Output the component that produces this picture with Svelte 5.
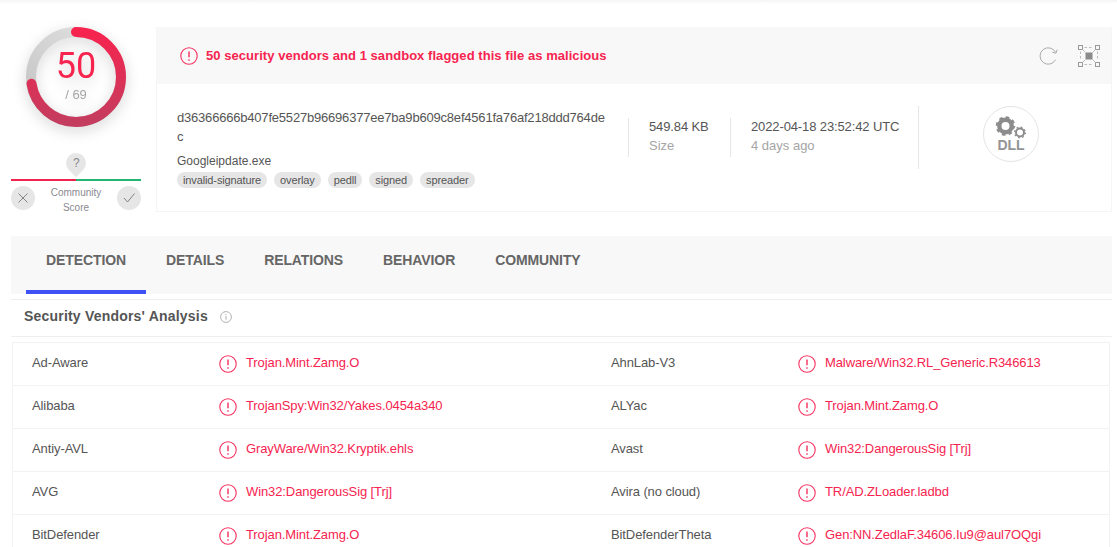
<script lang="ts">
	const tags = ['invalid-signature', 'overlay', 'pedll', 'signed', 'spreader'];
	const tabs = ['DETECTION', 'DETAILS', 'RELATIONS', 'BEHAVIOR', 'COMMUNITY'];
	const rows = [
		['Ad-Aware', 'Trojan.Mint.Zamg.O', 'AhnLab-V3', 'Malware/Win32.RL_Generic.R346613'],
		['Alibaba', 'TrojanSpy:Win32/Yakes.0454a340', 'ALYac', 'Trojan.Mint.Zamg.O'],
		['Antiy-AVL', 'GrayWare/Win32.Kryptik.ehls', 'Avast', 'Win32:DangerousSig [Trj]'],
		['AVG', 'Win32:DangerousSig [Trj]', 'Avira (no cloud)', 'TR/AD.ZLoader.ladbd'],
		['BitDefender', 'Trojan.Mint.Zamg.O', 'BitDefenderTheta', 'Gen:NN.ZedlaF.34606.Iu9@aul7OQgi']
	];

	const r = 45;
	const circ = 2 * Math.PI * r;
	const flagged = (50 / 69) * circ;
</script>

{#snippet alert(size: number)}
	<svg class="alert" width={size} height={size} viewBox="0 0 18 18" fill="none" stroke="#f6305f">
		<circle cx="9" cy="9" r="8.2" stroke-width="1.1" />
		<path d="M9 4.6v5.6M9 12.2v1.5" stroke-width="1.4" />
	</svg>
{/snippet}

<div class="page">
	<div class="top">
		<aside class="score">
			<div class="gauge">
				<svg width="110" height="110" viewBox="0 0 110 110">
					<defs>
						<linearGradient id="red" x1="1" y1="0" x2="0" y2="0">
							<stop offset="0" stop-color="#f6244f" />
							<stop offset="1" stop-color="#c43c5e" />
						</linearGradient>
						<linearGradient id="grey" x1="1" y1="0" x2="0" y2="1">
							<stop offset="0" stop-color="#e4e4e4" />
							<stop offset="1" stop-color="#c2c2c2" />
						</linearGradient>
					</defs>
					<circle cx="55" cy="55" r="45" fill="none" stroke="url(#grey)" stroke-width="10" />
					<circle
						cx="55"
						cy="55"
						r="45"
						fill="none"
						stroke="url(#red)"
						stroke-width="10"
						stroke-linecap="round"
						stroke-dasharray="{flagged} {circ}"
						transform="rotate(-90 55 55)"
					/>
				</svg>
				<div class="count">
					<span class="num">50</span>
					<span class="total">/ 69</span>
				</div>
			</div>

			<div class="community">
				<div class="pin"><span>?</span></div>
				<div class="bar"></div>
				<div class="votes">
					<button aria-label="Harmless">
						<svg width="12" height="12" viewBox="0 0 12 12" fill="none" stroke="#777" stroke-width="0.9"><path d="M1.5 1.5l9 9M10.5 1.5l-9 9" /></svg>
					</button>
					<div class="label">Community<br />Score</div>
					<button aria-label="Malicious">
						<svg width="14" height="12" viewBox="0 0 14 12" fill="none" stroke="#777" stroke-width="0.9"><path d="M2 6l3.5 4L12.5 1.5" /></svg>
					</button>
				</div>
			</div>
		</aside>

		<section class="card">
			<div class="card-head">
				{@render alert(18)}
				<span class="verdict">50 security vendors and 1 sandbox flagged this file as malicious</span>
				<div class="tools">
					<svg width="20" height="18" viewBox="0 0 20 18" fill="none" stroke="#aaa" stroke-width="1">
						<path d="M17.6 5.4A8.2 8.2 0 1 0 17.6 12.6" />
						<path d="M19.2 2.6l-1.3 3.6-3.6-1" />
					</svg>
					<svg width="22" height="22" viewBox="0 0 22 22" fill="none" stroke="#999">
						<rect x="0.5" y="0.5" width="4" height="4" />
						<rect x="17.5" y="0.5" width="4" height="4" />
						<rect x="0.5" y="17.5" width="4" height="4" />
						<rect x="17.5" y="17.5" width="4" height="4" />
						<rect x="7.5" y="7.5" width="7" height="7" fill="#8a8a8a" stroke="none" />
						<path d="M6.5 2.5h9M6.5 19.5h9M2.5 6.5v9M19.5 6.5v9" stroke-dasharray="2.5 2" stroke="#bbb" />
						<path d="M4.5 4.5l3 3M17.5 4.5l-3 3M4.5 17.5l3-3M17.5 17.5l-3-3" stroke="#bbb" />
					</svg>
				</div>
			</div>
			<div class="card-body">
				<div class="file">
					<div class="hash">d36366666b407fe5527b96696377ee7ba9b609c8ef4561fa76af218ddd764dec</div>
					<div class="name">Googleipdate.exe</div>
					<div class="tags">
						{#each tags as tag}
							<span class="tag">{tag}</span>
						{/each}
					</div>
				</div>
				<div class="meta size">
					<div class="value">549.84 KB</div>
					<div class="sub">Size</div>
				</div>
				<div class="meta date">
					<div class="value">2022-04-18 23:52:42 UTC</div>
					<div class="sub">4 days ago</div>
				</div>
				<div class="type">
					<div class="type-badge">
						<svg width="36" height="24" viewBox="0 0 36 24" fill="none">
							<circle cx="12.5" cy="10" r="6.2" stroke="#8c8c8c" stroke-width="4.4" />
							<circle cx="12.5" cy="10" r="8.8" stroke="#8c8c8c" stroke-width="2" stroke-dasharray="3.6 3.31" />
							<circle cx="27" cy="16.5" r="7" fill="#fff" />
							<circle cx="27" cy="16.5" r="4" stroke="#8c8c8c" stroke-width="2" />
							<circle cx="27" cy="16.5" r="5.4" stroke="#8c8c8c" stroke-width="1.2" stroke-dasharray="1.8 2.44" />
						</svg>
						<span>DLL</span>
					</div>
				</div>
			</div>
		</section>
	</div>

	<nav class="tabs">
		{#each tabs as tab, i}
			<div class="tab" class:active={i === 0}>{tab}</div>
		{/each}
	</nav>

	<h2 class="heading">
		Security Vendors' Analysis
		<svg width="12" height="12" viewBox="0 0 12 12" fill="none" stroke="#aaa"><circle cx="6" cy="6" r="5.4" stroke-width="0.9" /><path d="M6 5.2v3.4M6 3.2v1" stroke-width="1" /></svg>
	</h2>

	<div class="table">
		{#each rows as row}
			<div class="row">
				<div class="vendor">{row[0]}</div>
				<div class="result">{@render alert(18)}<span>{row[1]}</span></div>
				<div class="vendor">{row[2]}</div>
				<div class="result">{@render alert(18)}<span>{row[3]}</span></div>
			</div>
		{/each}
	</div>
</div>

<style>
	:global(body) {
		background: #fff;
		overflow: hidden;
	}

	.page {
		height: 547px;
		overflow: hidden;
		box-sizing: border-box;
		padding: 27px 5px 0 11px;
		font-family: "Liberation Sans", Arial, sans-serif;
		font-size: 13px;
		color: #555;
		background: linear-gradient(#f4f4f4, #fff 4px);
	}

	.top {
		display: flex;
		height: 185px;
	}

	.score {
		width: 130px;
		margin-right: 15px;
		display: flex;
		flex-direction: column;
		align-items: center;
	}

	.gauge {
		position: relative;
		width: 110px;
		height: 110px;
		margin-top: -5px;
		filter: drop-shadow(0 4px 7px rgba(0, 0, 0, 0.16));
	}

	.gauge svg {
		display: block;
	}

	.count {
		position: absolute;
		inset: 0;
		display: flex;
		flex-direction: column;
		align-items: center;
	}

	.num {
		margin-top: 24px;
		font-family: Roboto, sans-serif;
		font-weight: 400;
		font-size: 36px;
		line-height: 40px;
		color: #f6244f;
	}

	.total {
		margin-top: 1px;
		font-size: 13px;
		line-height: 16px;
		color: #a5a5a5;
	}

	.community {
		width: 130px;
		margin-top: 21px;
	}

	.pin {
		width: 20px;
		height: 20px;
		margin: 0 auto;
		border-radius: 50% 50% 0 50%;
		transform: rotate(45deg);
		background: #e6e6e6;
		display: flex;
		align-items: center;
		justify-content: center;
		font-size: 12px;
		color: #888;
	}

	.pin span {
		transform: rotate(-45deg);
	}

	.bar {
		height: 2px;
		margin-top: 6px;
		background: linear-gradient(90deg, #f0234f 50%, #22b573 50%);
	}

	.votes {
		display: flex;
		justify-content: space-between;
		align-items: flex-start;
		margin-top: 5px;
	}

	.votes button {
		width: 24px;
		height: 24px;
		padding: 0;
		border: none;
		border-radius: 50%;
		background: #e6e6e6;
		display: flex;
		align-items: center;
		justify-content: center;
	}

	.label {
		margin-top: -1px;
		font-size: 10px;
		line-height: 15px;
		text-align: center;
		color: #8a8a92;
	}

	.card {
		flex: 1;
		display: flex;
		flex-direction: column;
		border: 1px solid #f5f5f5;
		border-width: 0 1px 1px 1px;
		box-sizing: border-box;
		min-width: 0;
	}

	.card-head {
		height: 57px;
		flex-shrink: 0;
		background: #f8f8f8;
		display: flex;
		align-items: center;
		padding: 0 11px 0 23px;
	}

	.verdict {
		margin-left: 8px;
		font-size: 13px;
		font-weight: 700;
		letter-spacing: 0.05px;
		color: #f6244f;
	}

	.tools {
		margin-left: auto;
		display: flex;
		align-items: center;
		gap: 20px;
	}

	.card-body {
		flex: 1;
		display: flex;
		align-items: flex-start;
	}

	.file {
		width: 430px;
		margin-left: 20px;
		padding-top: 24px;
		margin-right: 21px;
	}

	.hash {
		line-height: 19px;
		letter-spacing: -0.2px;
		word-break: break-all;
		color: #555;
	}

	.name {
		margin-top: 7px;
		font-size: 12px;
		line-height: 16px;
	}

	.tags {
		display: flex;
		gap: 7px;
		margin-top: 3px;
	}

	.tag {
		height: 16px;
		line-height: 16px;
		padding: 0 6px;
		border-radius: 8px;
		background: #e6e6e6;
		font-size: 11px;
		letter-spacing: -0.12px;
	}

	.meta {
		margin-top: 34px;
		height: 39px;
		border-left: 1px solid #e6e6e6;
		padding: 0 0 0 20px;
		box-sizing: border-box;
	}

	.size {
		width: 102px;
	}

	.date {
		width: 188px;
	}

	.value {
		line-height: 18px;
		letter-spacing: -0.12px;
	}

	.sub {
		line-height: 20px;
		color: #a5a5a5;
	}

	.type {
		flex: 1;
		margin-top: 22px;
		height: 63px;
		border-left: 1px solid #e6e6e6;
		display: flex;
		align-items: flex-start;
		justify-content: center;
		padding-right: 8px;
	}

	.type-badge {
		width: 56px;
		height: 56px;
		box-sizing: border-box;
		border: 1px solid #e4e4e4;
		border-radius: 50%;
		display: flex;
		flex-direction: column;
		align-items: center;
		justify-content: center;
	}

	.type-badge svg {
		margin-bottom: -2px;
	}

	.type-badge span {
		font-size: 14px;
		line-height: 14px;
		font-weight: 700;
		color: #949494;
	}

	.tabs {
		margin-top: 24px;
		height: 58px;
		padding-left: 15px;
		background: #f8f8f8;
		display: flex;
	}

	.tab {
		padding: 15px 20px 0;
		height: 58px;
		box-sizing: border-box;
		font-size: 14px;
		font-weight: 700;
		line-height: 19px;
		letter-spacing: -0.1px;
		color: #666;
		border-bottom: 4px solid transparent;
	}

	.tab.active {
		border-bottom-color: #3f51f5;
	}

	.heading {
		margin: 5px 0 0;
		height: 38px;
		box-sizing: border-box;
		border-top: 1px solid #efefef;
		border-bottom: 1px solid #efefef;
		padding: 7px 0 0 13px;
		font-size: 14px;
		line-height: 18px;
		font-weight: 700;
		letter-spacing: 0.2px;
		color: #555;
	}

	.heading svg {
		margin-left: 8px;
		vertical-align: -2px;
	}

	.table {
		margin: 5px 2px 0 1px;
		border: 1px solid #f2f2f2;
		border-bottom: none;
	}

	.row {
		display: grid;
		grid-template-columns: 186px 392px 187px 1fr;
		height: 43px;
		box-sizing: border-box;
		border-bottom: 1px solid #f2f2f2;
		align-items: center;
		letter-spacing: -0.1px;
	}

	.vendor {
		padding: 0 0 4px 19px;
		color: #555;
	}

	.row .vendor:nth-child(3) {
		padding-left: 20px;
	}

	.result {
		display: flex;
		align-items: center;
		gap: 9px;
		color: #f6244f;
		padding-left: 20px;
	}

	.result span {
		margin-bottom: 4px;
	}
</style>
